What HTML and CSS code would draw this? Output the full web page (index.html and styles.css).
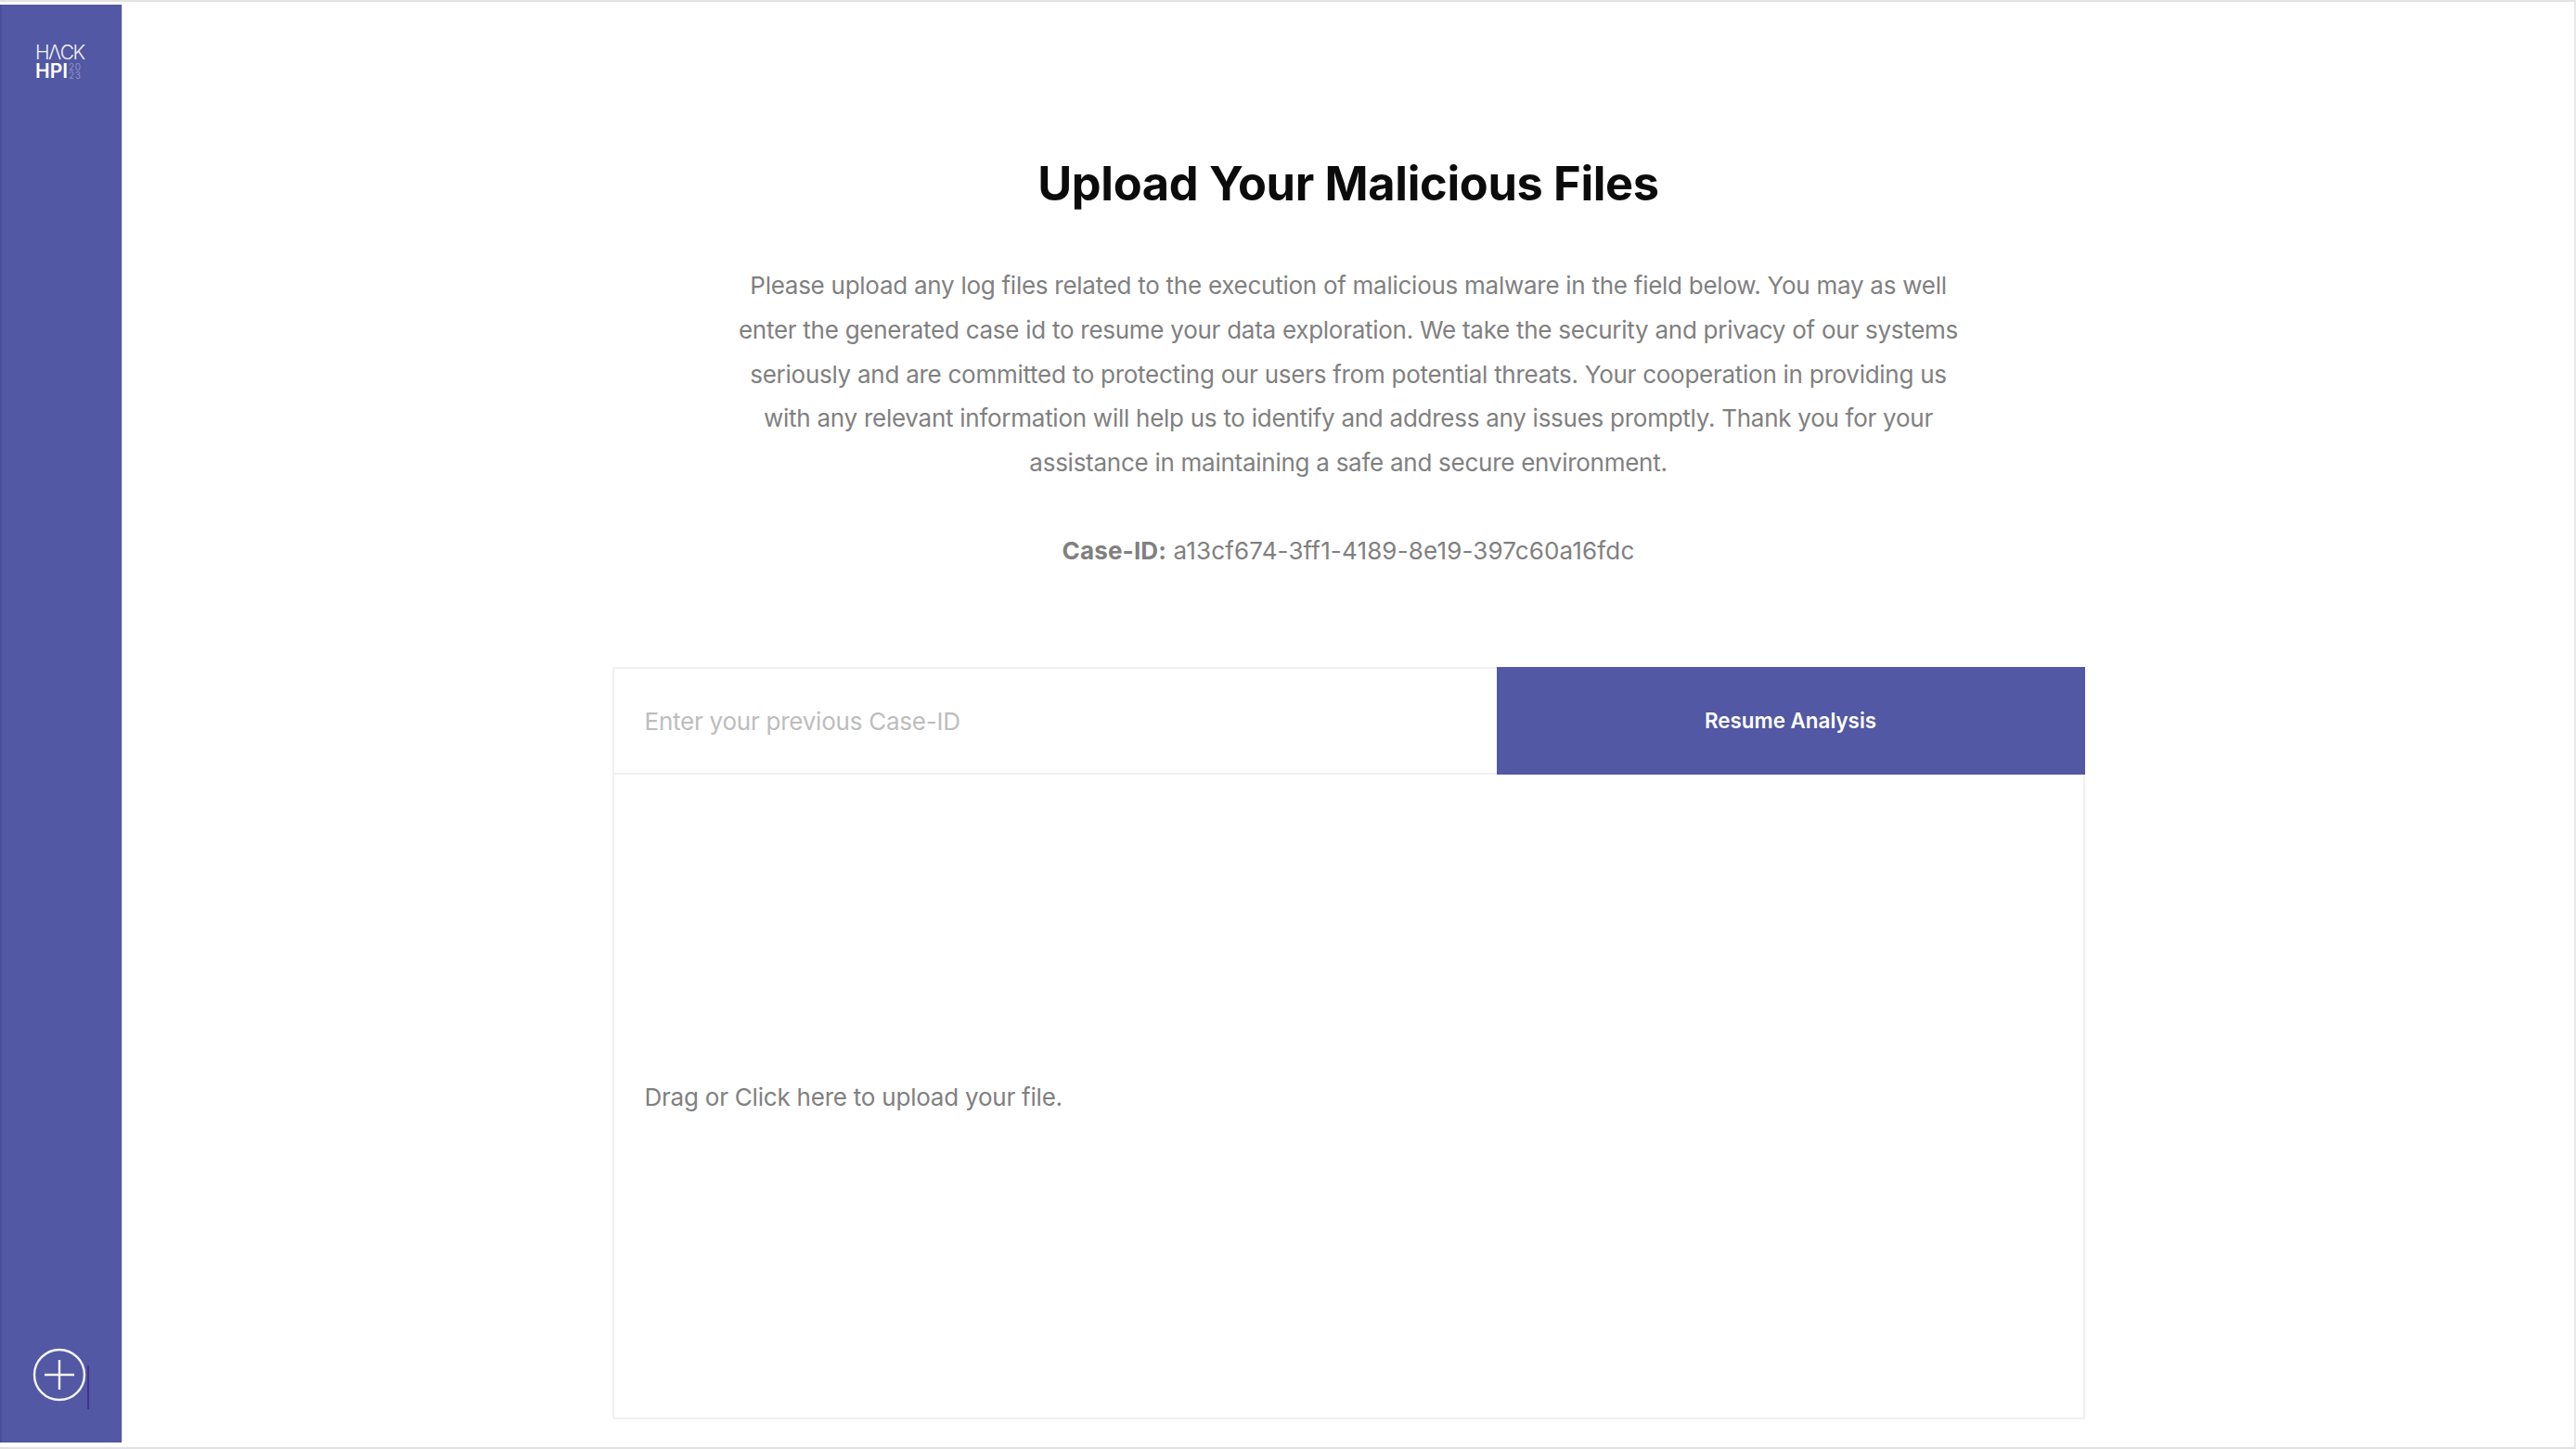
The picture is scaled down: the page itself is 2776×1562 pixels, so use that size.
FILE: index.html
```html
<!DOCTYPE html>
<html lang="en">
<head>
<meta charset="utf-8">
<title>Upload Your Malicious Files</title>
<link rel="stylesheet" href="styles.css">
</head>
<body>
<div class="frame">
  <aside class="sidebar">
    <div class="logo">
      <div class="logo-hack">HΛCK</div>
      <div class="logo-row"><span class="logo-hpi">HPI</span><span class="logo-year">20<br>23</span></div>
    </div>
    <div class="add-wrap">
      <svg class="add" width="60" height="60" viewBox="0 0 60 60" fill="none" stroke="#f4f4fa" stroke-width="2.4">
        <circle cx="30" cy="30" r="27"/>
        <path d="M14 30H46M30 14V46"/>
      </svg>
      <span class="caret"></span>
    </div>
  </aside>
  <main class="main">
    <h1 class="title">Upload Your Malicious Files</h1>
    <p class="intro">Please upload any log files related to the execution of malicious malware in the field below. You may as well<br>enter the generated case id to resume your data exploration. We take the security and privacy of our systems<br>seriously and are committed to protecting our users from potential threats. Your cooperation in providing us<br>with any relevant information will help us to identify and address any issues promptly. Thank you for your<br>assistance in maintaining a safe and secure environment.</p>
    <p class="case"><strong>Case-ID:</strong> a13cf674-3ff1-4189-8e19-397c60a16fdc</p>
    <section class="panel">
      <div class="resume">
        <input class="case-input" type="text" placeholder="Enter your previous Case-ID">
        <button class="resume-btn" type="button">Resume Analysis</button>
      </div>
      <div class="drop">Drag or Click here to upload your file.</div>
    </section>
  </main>
</div>
</body>
</html>
```
FILE: styles.css
```css
* { box-sizing: border-box; }
html, body { margin: 0; height: 100%; background: #fff; overflow: hidden; }
body { font-family: Inter, "Liberation Sans", sans-serif; }
.frame {
  height: 1562px;
  display: flex;
  padding: 3px 0 5px 0;
  border-top: 2px solid #e2e2e2;
  border-bottom: 2px solid #e2e2e2;
  border-right: 2px solid #e8e8e8;
}
.sidebar {
  width: 132px;
  flex: none;
  background: #5258a3;
  border-left: 2px solid #4a4f98;
  border-right: 1px solid #dcdde8;
  display: flex;
  flex-direction: column;
  justify-content: space-between;
  align-items: center;
}
.logo { color: #f2f2f8; margin-top: 42px; margin-right: 5px; width: 52px; }
.logo-hack { font-size: 21px; font-weight: 300; line-height: 20px; letter-spacing: -1.5px; white-space: nowrap; }
.logo-row { display: flex; align-items: center; gap: 1px; }
.logo-hpi { font-size: 21px; font-weight: 600; line-height: 19px; color: #fff; }
.logo-year { font-size: 10px; line-height: 9px; color: #8e92c6; font-weight: 400; letter-spacing: .5px; }
.add-wrap { position: relative; margin-bottom: 43px; margin-right: 6px; display: flex; }
.caret { position: absolute; left: 60px; top: 20px; width: 2px; height: 47px; background: #44308c; }
.main {
  flex: 1;
  display: flex;
  flex-direction: column;
  align-items: center;
}
.title {
  margin: 163px 0 0;
  font-size: 50.5px;
  line-height: 60px;
  font-weight: 700;
  color: #0b0b0b;
  letter-spacing: -.33px;
}
.intro {
  margin: 56px 0 0;
  font-size: 26px;
  line-height: 47.8px;
  letter-spacing: -.265px;
  color: #808080;
  text-align: center;
}
.case {
  margin: 47px 0 0;
  font-size: 26px;
  line-height: 48px;
  letter-spacing: .15px;
  color: #808080;
  text-align: center;
}
.case strong { font-weight: 700; }
.panel {
  width: 1587px;
  margin-top: 101px;
  border: 2px solid #f0f0f0;
}
.resume { display: flex; height: 114px; border-bottom: 2px solid #f0f0f0; }
.case-input {
  flex: 1;
  min-width: 0;
  border: 0;
  outline: 0;
  padding: 2px 0 0 33px;
  font: 26px Inter, sans-serif;
  letter-spacing: -.24px;
  color: #808080;
  background: transparent;
}
.case-input::placeholder { color: #bdbdbd; opacity: 1; }
.resume-btn {
  width: 634px;
  flex: none;
  margin: -2px -2px 0 0;
  height: 116px;
  border: 0;
  background: #5258a3;
  color: #fff;
  font: 600 22.4px Inter, sans-serif;
}
.drop {
  height: 693px;
  padding: 3px 0 0 33px;
  display: flex;
  align-items: center;
  font-size: 26px;
  letter-spacing: -.22px;
  color: #808080;
}
```
